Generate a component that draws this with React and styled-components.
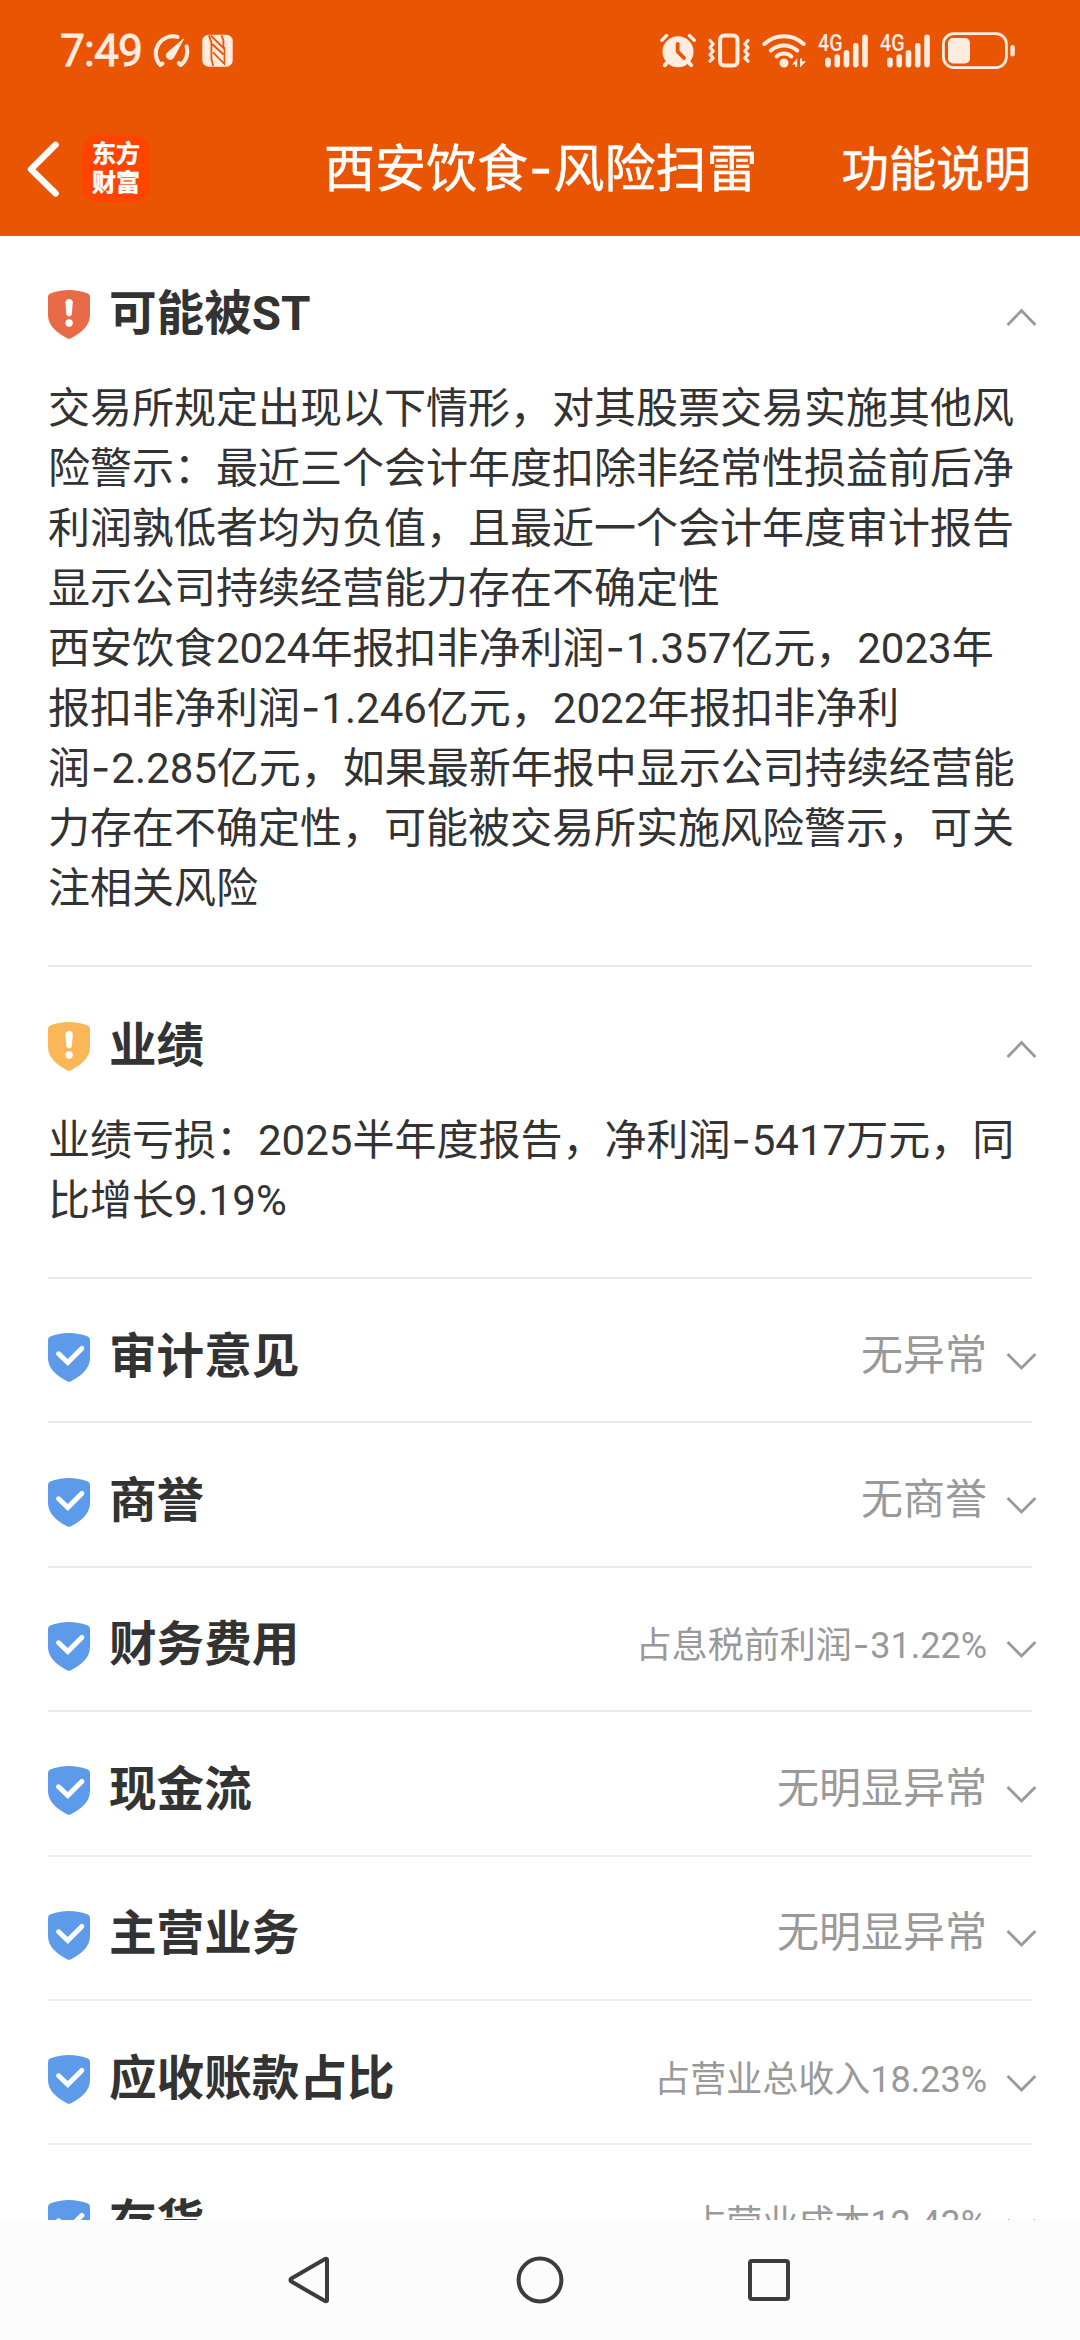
import React from 'react';
import styled, { createGlobalStyle } from 'styled-components';

const ORANGE = '#EA5504';
const CREAM = '#FFECE0';

const GlobalStyle = createGlobalStyle`
  * {
    box-sizing: border-box;
  }

  body {
    margin: 0;
    background: #FFFFFF;
    font-family: Roboto, "Noto Sans CJK SC", sans-serif;
  }
`;

const Screen = styled.div`
  width: 1080px;
  height: 2340px;

  display: flex;
  flex-direction: column;
  overflow: hidden;

  background: #FFFFFF;
  color: #333333;
`;

const Top = styled.header`
  flex: none;
  height: 236px;
  background: ${ORANGE};
`;

const StatusBar = styled.div`
  height: 101px;
  padding: 0 65px 0 60px;

  display: flex;
  align-items: center;
`;

const Time = styled.div`
  width: 90px;

  font-size: 44.5px;
  font-weight: 400;
  line-height: 50px;
  letter-spacing: -0.9px;
  white-space: nowrap;
  color: ${CREAM};
  -webkit-text-stroke: 0.8px ${CREAM};
`;

const StatusIcons = styled.div`
  display: flex;
  gap: ${props => props.gap}px;
  margin-left: ${props => (props.end ? 'auto' : 0)};
`;

const StatusIcon = styled.svg`
  display: block;
  flex: none;
  height: 37px;
  overflow: visible;
`;

const TitleBar = styled.div`
  height: 135px;
  padding: 0 49px 0 26px;

  display: grid;
  grid-template-columns: 298px 1fr auto;
  align-items: center;

  color: #FFFFFF;
  -webkit-text-stroke: 0.5px #FFFFFF;
`;

const TitleLeft = styled.div`
  display: flex;
  align-items: center;
  gap: 23px;
`;

const Logo = styled.div`
  width: 68px;
  height: 67px;
  padding-top: 2px;
  border-radius: 16px;
  background: #FF4400;

  font-family: "Noto Sans CJK SC", sans-serif;
  font-size: 24px;
  font-weight: 700;
  line-height: 29px;
  text-align: center;
`;

const Title = styled.h1`
  margin: 2px 0 0;
  font-size: 51px;
  font-weight: 400;
  line-height: 60px;
`;

const HelpLink = styled.div`
  margin-top: 2px;
  font-size: 47.4px;
  line-height: 60px;
`;

const List = styled.main`
  flex: 1;
  min-height: 0;
  overflow: hidden;
  margin-top: -1px;
  padding: 0 48px;
`;

const Section = styled.section`
  border-bottom: 2px solid #EAEAEA;
  padding-bottom: ${props => (props.open ? 46 : 0)}px;
`;

const SectionHead = styled.div`
  height: ${props => (props.open ? 144 : 142.4)}px;
  margin-right: -5px;
  padding-top: 15px;

  display: flex;
  align-items: center;
`;

const SectionTitle = styled.h2`
  margin: 0 0 2px 19px;
  flex: 1;

  font-size: 47.6px;
  font-weight: 700;
  line-height: 60px;
`;

const Result = styled.div`
  margin: 0 19px ${props => (props.small ? 0 : 4)}px 0;
  font-size: ${props => (props.small ? 36 : 42)}px;
  line-height: 60px;
  color: #999999;
`;

const Detail = styled.p`
  margin: 0;
  font-size: 42px;
  line-height: 60px;
`;

// Roboto's hyphen is too short for a minus sign
const Hyphen = styled.span`
  margin: 0 1px;
  font-family: Inter, sans-serif;
  line-height: 1;
`;

const NavBar = styled.nav`
  flex: none;
  height: 120px;
  background: #FCFCFC;

  display: grid;
  grid-template-columns: repeat(3, 229px);
  justify-content: center;
  align-items: center;
  justify-items: center;
`;

function Text({ children }) {
  return children.split('-').map((part, i) => (
    <React.Fragment key={i}>
      {i > 0 && <Hyphen>-</Hyphen>}
      {part}
    </React.Fragment>
  ));
}

function GaugeIcon() {
  return (
    <StatusIcon width="42" viewBox="0 0 42 37" fill="none" stroke={CREAM} strokeWidth="4" strokeLinecap="round" strokeLinejoin="round">
      <path d="M12.5 31.5L10.2 33A17.2 17.2 0 0 1 27.5 4.9" />
      <path d="M36.6 14.5A17.2 17.2 0 0 1 30.8 33L28.8 31.2" />
      <path d="M33.2 7.2L17.8 20.4A4 4 0 1 0 24.2 24.6Z" fill={CREAM} strokeWidth="1" />
    </StatusIcon>
  );
}

function NfcIcon() {
  return (
    <StatusIcon width="31" viewBox="0 0 31 37" fill="none" stroke={ORANGE} strokeWidth="1.8">
      <rect x="0.3" y="2.7" width="30.4" height="32" rx="6.5" fill={CREAM} stroke="none" />
      <path d="M6.8 3.4L9.4 10.5V27L11.2 34" />
      <path d="M8.6 3.4L21.4 16V8.5L19.4 3.4" />
      <path d="M10 12L21.6 22.6" strokeWidth="2" />
      <path d="M11 20.4L22.4 32V15" strokeWidth="1.6" />
    </StatusIcon>
  );
}

function AlarmIcon() {
  return (
    <StatusIcon width="36" viewBox="0 0 36 37" fill="none" stroke={CREAM} strokeLinecap="round" strokeLinejoin="round">
      <circle cx="18" cy="19.7" r="15.5" fill={CREAM} stroke="none" />
      <path d="M1.8 8.2L6.6 3.6M34.2 8.2L29.4 3.6" strokeWidth="3.4" />
      <path d="M8 29.5L4.8 33.2M28 29.5L31.2 33.2" strokeWidth="4" />
      <path d="M17.7 12V19.6L24 26" stroke={ORANGE} strokeWidth="3.8" />
    </StatusIcon>
  );
}

function VibrateIcon() {
  return (
    <StatusIcon width="42" viewBox="0 0 42 37" fill="none" stroke={CREAM} strokeLinecap="round" strokeLinejoin="round">
      <rect x="12.1" y="3.5" width="17.4" height="30" rx="4" strokeWidth="4" />
      <path d="M2 8.5L5.2 12L2 15.6L5.2 19L2 22.6L5.2 26L2 29.2" strokeWidth="3.2" />
      <path d="M40 8.5L36.8 12L40 15.6L36.8 19L40 22.6L36.8 26L40 29.2" strokeWidth="3.2" />
    </StatusIcon>
  );
}

function WifiIcon() {
  return (
    <StatusIcon width="44" viewBox="0 0 44 37" fill="none" stroke={CREAM} strokeWidth="4" strokeLinecap="round">
      <path d="M2.4 12A28.5 28.5 0 0 1 41.6 12" />
      <path d="M8.8 18.6A19.6 19.6 0 0 1 35.2 18.6" />
      <path d="M14.6 24.4A11 11 0 0 1 29.4 24.4" />
      <circle cx="22" cy="31" r="4.5" fill={CREAM} stroke="none" />
      <path d="M35.2 26V35H33.2V32.4H30.2Z M38 26.6V35.4L44 29.2H40V26.6Z" fill={CREAM} stroke="none" />
    </StatusIcon>
  );
}

function SignalIcon() {
  const tops = [28.2, 25, 20.8, 13.8, 5.2];
  return (
    <StatusIcon width="50" viewBox="0 0 50 37" stroke={CREAM} strokeWidth="5.6" strokeLinecap="round">
      {tops.map((top, i) => (
        <line key={top} x1={10 + i * 9.25} x2={10 + i * 9.25} y1={top} y2="32.6" />
      ))}
      <text
        x="0"
        y="18.6"
        fill={CREAM}
        stroke="none"
        fontSize="23"
        fontWeight="500"
        textLength="24.5"
        lengthAdjust="spacingAndGlyphs"
      >
        4G
      </text>
    </StatusIcon>
  );
}

function BatteryIcon() {
  return (
    <StatusIcon width="73" viewBox="0 0 73 37" fill={CREAM}>
      <rect x="1.4" y="1.6" width="63" height="34" rx="10.5" fill="none" stroke={CREAM} strokeWidth="2.8" />
      <rect x="6" y="6" width="22" height="25.4" rx="5" />
      <rect x="68.4" y="13" width="4.4" height="11.4" rx="2.2" />
    </StatusIcon>
  );
}

function BackIcon() {
  return (
    <svg width="33" height="56" viewBox="0 0 33 56" fill="none" stroke="#FFFFFF" strokeWidth="6.4" strokeLinecap="round" strokeLinejoin="round">
      <path d="M29.6 3.8L5 28.2L29.6 52.4" />
    </svg>
  );
}

const SHIELD_COLORS = {
  danger: '#E96A47',
  warning: '#FBB757',
  ok: '#5D9AEA',
};

function Shield({ level }) {
  return (
    <svg width="42" height="49" viewBox="0 0 42 49">
      <path d="M0 7Q0 4.6 2.2 3.6C13 -1.2 29 -1.2 39.8 3.6Q42 4.6 42 7V25C42 36 33 43 22.6 48.4Q21 49.2 19.4 48.4C9 43 0 36 0 25Z" fill={SHIELD_COLORS[level]} />
      {level === 'ok' ? (
        <path d="M10.6 20.8L19.8 29.6L33.8 15.4" fill="none" stroke="#FFFFFF" strokeWidth="5" strokeLinecap="round" />
      ) : (
        <g fill="#FFFFFF">
          <path d="M17.4 12A3.8 3.8 0 0 1 24.8 12L23.8 24.6Q23.4 26.4 21.1 26.4Q18.8 26.4 18.4 24.6Z" />
          <circle cx="21.1" cy="33" r="3.7" />
        </g>
      )}
    </svg>
  );
}

const ChevronIcon = styled.svg`
  flex: none;
  overflow: visible;
  margin-top: ${props => (props.$up ? 5 : 3)}px;
`;

function Chevron({ up }) {
  return (
    <ChevronIcon $up={up} width="31" height="19" viewBox="0 0 31 19" fill="none" stroke="#999999" strokeWidth="2.8">
      <path d={up ? 'M1.6 17L15.5 2.6L29.4 17' : 'M1.6 4L15.5 18L29.4 4'} />
    </ChevronIcon>
  );
}

const ITEMS = [
  {
    title: '可能被ST',
    level: 'danger',
    details: [
      '交易所规定出现以下情形，对其股票交易实施其他风险警示：最近三个会计年度扣除非经常性损益前后净利润孰低者均为负值，且最近一个会计年度审计报告显示公司持续经营能力存在不确定性',
      '西安饮食2024年报扣非净利润-1.357亿元，2023年报扣非净利润-1.246亿元，2022年报扣非净利润-2.285亿元，如果最新年报中显示公司持续经营能力存在不确定性，可能被交易所实施风险警示，可关注相关风险',
    ],
  },
  {
    title: '业绩',
    level: 'warning',
    details: ['业绩亏损：2025半年度报告，净利润-5417万元，同比增长9.19%'],
  },
  { title: '审计意见', level: 'ok', result: '无异常' },
  { title: '商誉', level: 'ok', result: '无商誉' },
  { title: '财务费用', level: 'ok', result: '占息税前利润-31.22%', small: true },
  { title: '现金流', level: 'ok', result: '无明显异常' },
  { title: '主营业务', level: 'ok', result: '无明显异常' },
  { title: '应收账款占比', level: 'ok', result: '占营业总收入18.23%', small: true },
  { title: '存货', level: 'ok', result: '占营业成本12.43%', small: true },
];

function RiskItem({ title, level, result, small, details }) {
  const open = Boolean(details);

  return (
    <Section open={open}>
      <SectionHead open={open}>
        <Shield level={level} />
        <SectionTitle>{title}</SectionTitle>
        {result && (
          <Result small={small}>
            <Text>{result}</Text>
          </Result>
        )}
        <Chevron up={open} />
      </SectionHead>

      {open && details.map(detail => (
        <Detail key={detail}>
          <Text>{detail}</Text>
        </Detail>
      ))}
    </Section>
  );
}

export default function App() {
  return (
    <Screen lang="zh-CN">
      <GlobalStyle />

      <Top>
        <StatusBar>
          <Time>7:49</Time>
          <StatusIcons gap={10}>
            <GaugeIcon />
            <NfcIcon />
          </StatusIcons>
          <StatusIcons gap={12} end>
            <AlarmIcon />
            <VibrateIcon />
            <WifiIcon />
            <SignalIcon />
            <SignalIcon />
            <BatteryIcon />
          </StatusIcons>
        </StatusBar>

        <TitleBar>
          <TitleLeft>
            <BackIcon />
            <Logo>
              东方<br />财富
            </Logo>
          </TitleLeft>
          <Title>
            <Text>西安饮食-风险扫雷</Text>
          </Title>
          <HelpLink>功能说明</HelpLink>
        </TitleBar>
      </Top>

      <List>
        {ITEMS.map(item => (
          <RiskItem key={item.title} {...item} />
        ))}
      </List>

      <NavBar>
        <svg width="48" height="48" viewBox="0 0 48 48" fill="none" stroke="#3C3C3C" strokeWidth="4" strokeLinejoin="round">
          <path d="M40 3.2Q39 2.4 37.6 3.2L4.4 22.4Q2.4 24 4.4 25.6L37.6 44.8Q39 45.6 40 44.8Z" />
        </svg>
        <svg width="48" height="48" viewBox="0 0 48 48" fill="none" stroke="#3C3C3C" strokeWidth="4">
          <circle cx="24" cy="24" r="21.4" />
        </svg>
        <svg width="48" height="48" viewBox="0 0 48 48" fill="none" stroke="#3C3C3C" strokeWidth="4">
          <rect x="5" y="5" width="38" height="38" rx="2" />
        </svg>
      </NavBar>
    </Screen>
  );
}
